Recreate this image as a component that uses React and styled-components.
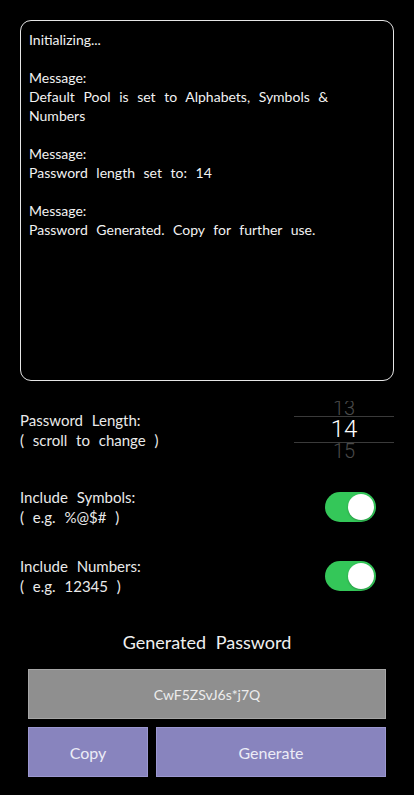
import styled, { createGlobalStyle } from 'styled-components';

const GlobalStyle = createGlobalStyle`
    html, body {
        margin: 0;
        padding: 0;
        background: #000;
    }
    body {
        font-family: Lato, "Open Sans", sans-serif;
        color: #fff;
    }
`;

const Screen = styled.div`
    width: 414px;
    height: 795px;
    box-sizing: border-box;
    padding: 20px 20px 0 20px;
    background: #000;
    display: flex;
    flex-direction: column;
`;

const LogBox = styled.div`
    height: 361px;
    box-sizing: border-box;
    border: 1.5px solid #e6e6e6;
    border-radius: 11px;
    padding: 9px 8px;
    font-size: 14px;
    line-height: 19px;
    word-spacing: 5px;
    color: #f2f2f2;
`;

const LogEntry = styled.p`
    margin: 0 0 19px 0;
`;

const SettingRow = styled.div`
    display: flex;
    align-items: center;
    justify-content: space-between;
    height: ${p => p.$h}px;
    margin-top: ${p => p.$mt}px;
`;

const Label = styled.div`
    font-size: 15px;
    line-height: 20px;
    word-spacing: 5px;
    color: #eaeaea;
`;

const Picker = styled.div`
    width: 100px;
    height: 58px;
    display: flex;
    flex-direction: column;
    overflow: hidden;
    font-family: Roboto, "Liberation Sans", sans-serif;
    font-weight: 300;
`;

/* the rows above and below the selection are only partly visible */
const EdgeItem = styled.div`
    height: 15px;
    flex-shrink: 0;
    overflow: hidden;
    display: flex;
    justify-content: center;
    align-items: ${p => (p.$top ? 'flex-end' : 'flex-start')};
    font-size: 20px;
    line-height: 16px;
    color: #4a4a4a;
`;

const CurrentItem = styled.div`
    height: 27px;
    flex-shrink: 0;
    box-sizing: border-box;
    border-top: 1px solid #3a3a3a;
    border-bottom: 1px solid #3a3a3a;
    text-align: center;
    font-size: 24px;
    line-height: 25px;
    color: #fff;
`;

const Toggle = styled.div`
    width: 51px;
    height: 30px;
    border-radius: 15px;
    background: #34c759;
    display: flex;
    align-items: center;
    justify-content: flex-end;
    padding: 2px;
    box-sizing: border-box;
    margin-right: 18px;
`;

const Knob = styled.div`
    width: 26px;
    height: 26px;
    border-radius: 50%;
    background: #fff;
    box-shadow: 0 1px 2px rgba(0, 0, 0, 0.25);
`;

const Title = styled.div`
    margin-top: 34px;
    text-align: center;
    font-size: 18px;
    line-height: 24px;
    word-spacing: 5px;
    color: #f0f0f0;
`;

const Actions = styled.div`
    padding: 0 8px;
    display: flex;
    flex-direction: column;
    gap: 8px;
    margin-top: 15px;
`;

const PasswordField = styled.div`
    height: 50px;
    box-sizing: border-box;
    background: #8f8f8f;
    border: 1px solid #a6a6a6;
    display: flex;
    align-items: center;
    justify-content: center;
    font-size: 14px;
    color: #ececec;
`;

const ButtonRow = styled.div`
    display: flex;
    gap: 8px;
`;

const Button = styled.button`
    flex: ${p => (p.$wide ? '0 0 230px' : '0 0 120px')};
    height: 50px;
    box-sizing: border-box;
    background: #8884be;
    border: 1px solid #9b97d0;
    color: #ececf6;
    font-family: inherit;
    font-size: 16px;
    cursor: pointer;
`;

function App() {
    return (
        <>
            <GlobalStyle />
            <Screen>
                <LogBox>
                    <LogEntry>Initializing...</LogEntry>
                    <LogEntry>Message:<br />Default Pool is set to Alphabets, Symbols &amp; Numbers</LogEntry>
                    <LogEntry>Message:<br />Password length set to: 14</LogEntry>
                    <LogEntry>Message:<br />Password Generated. Copy for further use.</LogEntry>
                </LogBox>

                <SettingRow $h={58} $mt={20}>
                    <Label>Password Length:<br />( scroll to change )</Label>
                    <Picker>
                        <EdgeItem $top>13</EdgeItem>
                        <CurrentItem>14</CurrentItem>
                        <EdgeItem>15</EdgeItem>
                    </Picker>
                </SettingRow>

                <SettingRow $h={40} $mt={28}>
                    <Label>Include Symbols:<br />( e.g. %@$# )</Label>
                    <Toggle><Knob /></Toggle>
                </SettingRow>

                <SettingRow $h={40} $mt={29}>
                    <Label>Include Numbers:<br />( e.g. 12345 )</Label>
                    <Toggle><Knob /></Toggle>
                </SettingRow>

                <Title>Generated Password</Title>

                <Actions>
                    <PasswordField>CwF5ZSvJ6s*j7Q</PasswordField>
                    <ButtonRow>
                        <Button>Copy</Button>
                        <Button $wide>Generate</Button>
                    </ButtonRow>
                </Actions>
            </Screen>
        </>
    );
}

export default App;
